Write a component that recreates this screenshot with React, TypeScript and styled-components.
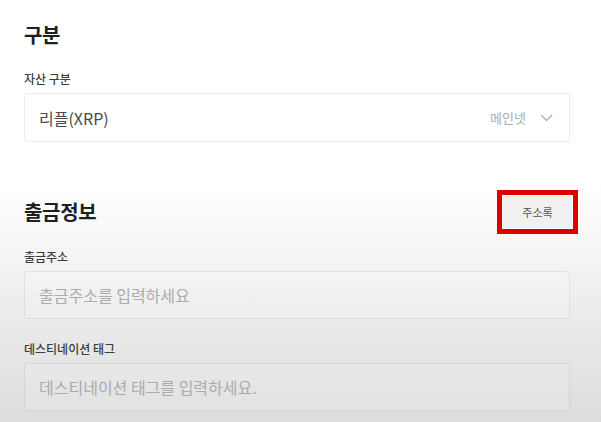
import React from "react"
import styled, { createGlobalStyle } from "styled-components"

const GlobalStyle = createGlobalStyle`
  html, body {
    margin: 0;
    padding: 0;
  }
  body {
    width: 601px;
    height: 422px;
    overflow: hidden;
    font-family: "Noto Sans CJK KR", "Noto Sans", sans-serif;
    background: linear-gradient(
      to bottom,
      #ffffff 0px,
      #ffffff 185px,
      #f8f8f8 230px,
      #efefef 290px,
      #e5e5e5 360px,
      #dcdcdc 422px
    );
  }
`

const Page = styled.div`
  width: 546px;
  padding: 21px 0 0 24px;
  display: flex;
  flex-direction: column;
`

const Section = styled.section<{ $top?: number }>`
  display: flex;
  flex-direction: column;
  margin-top: ${(p) => p.$top ?? 0}px;
`

const SectionHead = styled.div`
  display: flex;
  align-items: center;
  justify-content: space-between;
  height: 46px;
  margin-right: -8px;
`

const Title = styled.h2`
  margin: 0;
  font-size: 20px;
  line-height: 28px;
  font-weight: 700;
  color: #1f1f1f;
  letter-spacing: -0.3px;
`

const Label = styled.div<{ $top?: number }>`
  margin-top: ${(p) => p.$top ?? 0}px;
  font-size: 12px;
  line-height: 17px;
  font-weight: 500;
  color: #3c3c3c;
`

const Field = styled.div<{ $top?: number; $h?: number }>`
  margin-top: ${(p) => p.$top ?? 0}px;
  height: ${(p) => p.$h ?? 48}px;
  box-sizing: border-box;
  border: 1px solid rgba(0, 0, 0, 0.07);
  border-radius: 3px;
  background: rgba(255, 255, 255, 0.15);
  display: flex;
  align-items: center;
  padding: 0 16px 0 14px;
  font-size: 16px;
  color: #4a4a4a;
`

const Value = styled.span`
  flex: 1;
`

const Placeholder = styled.span`
  flex: 1;
  color: #ababab;
`

const Network = styled.span`
  font-size: 13px;
  color: #ababab;
  margin-right: 14px;
`

const Chevron = styled.svg`
  width: 13px;
  height: 8px;
  stroke: #b4b4b4;
  fill: none;
  stroke-width: 1.5;
`

const Highlight = styled.div`
  border: 5px solid #dd0000;
  padding: 1px;
  display: flex;
`

const AddrButton = styled.button`
  width: 69px;
  height: 32px;
  border: none;
  background: #f0f0f0;
  font-family: inherit;
  font-size: 11px;
  color: #555;
  cursor: pointer;
`

export default function App() {
  return (
    <>
      <GlobalStyle />
      <Page>
        <Section>
          <Title>구분</Title>
          <Label $top={21}>자산 구분</Label>
          <Field $top={6} $h={49}>
            <Value>리플(XRP)</Value>
            <Network>메인넷</Network>
            <Chevron viewBox="0 0 13 8">
              <path d="M1 1l5.5 5.5L12 1" />
            </Chevron>
          </Field>
        </Section>
        <Section $top={47}>
          <SectionHead>
            <Title>출금정보</Title>
            <Highlight>
              <AddrButton>주소록</AddrButton>
            </Highlight>
          </SectionHead>
          <Label $top={13}>출금주소</Label>
          <Field $top={6}>
            <Placeholder>출금주소를 입력하세요</Placeholder>
          </Field>
          <Label $top={21}>데스티네이션 태그</Label>
          <Field $top={6}>
            <Placeholder>데스티네이션 태그를 입력하세요.</Placeholder>
          </Field>
        </Section>
      </Page>
    </>
  )
}
